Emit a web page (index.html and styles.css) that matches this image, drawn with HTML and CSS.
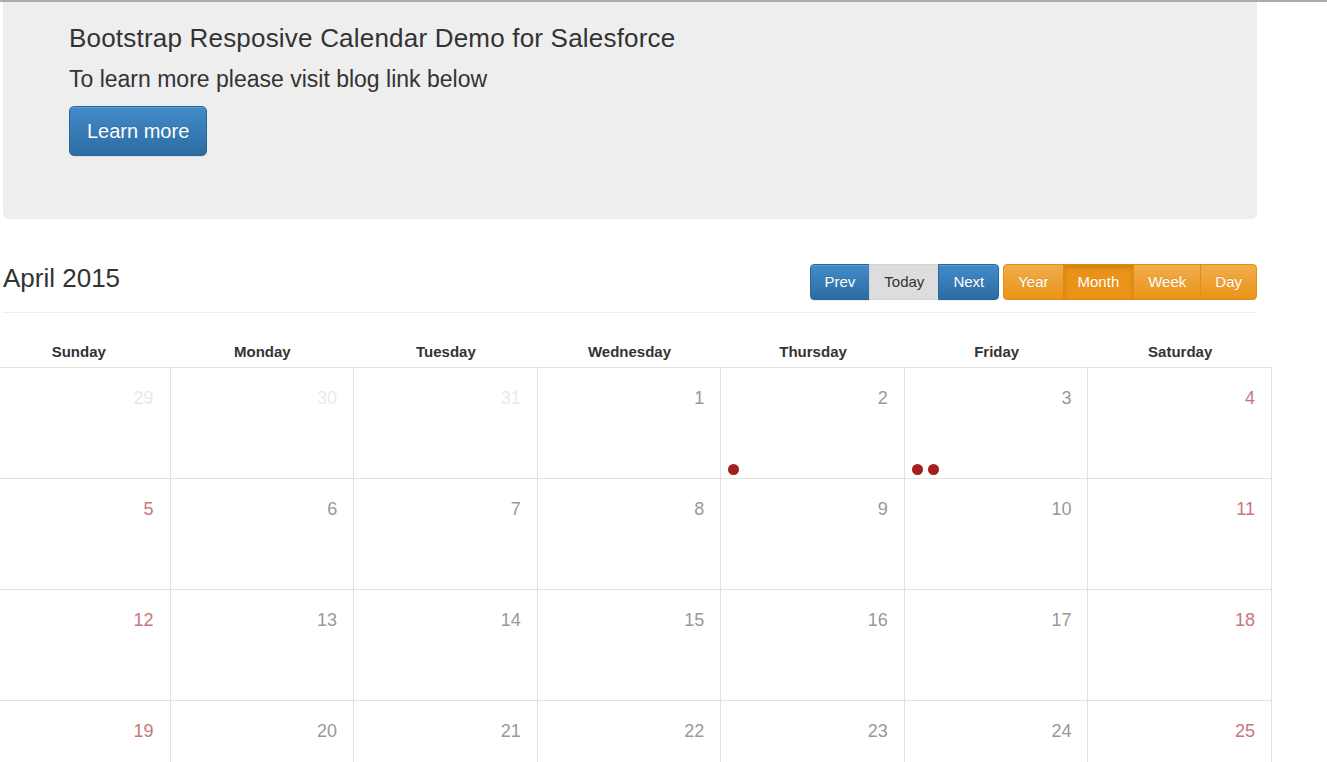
FILE: index.html
```html
<!DOCTYPE html>
<html lang="en">
<head>
  <meta charset="UTF-8">
  <title>Bootstrap Calendar Demo</title>
  <link rel="stylesheet" href="styles.css">
</head>
<body>
  <div class="container">

    <!-- Banner -->
    <div class="jumbotron">
      <h1 class="jumbo-title">Bootstrap Resposive Calendar Demo for Salesforce</h1>
      <p class="lead">To learn more please visit blog link below</p>
      <a class="btn btn-primary btn-lg" href="#">Learn more</a>
    </div>

    <!-- Calendar toolbar -->
    <div class="cal-header">
      <h3 class="cal-title">April 2015</h3>
      <div class="toolbar">
        <div class="btn-group">
          <button class="btn btn-primary">Prev</button>
          <button class="btn btn-default active">Today</button>
          <button class="btn btn-primary">Next</button>
        </div>
        <div class="btn-group">
          <button class="btn btn-warning">Year</button>
          <button class="btn btn-warning active">Month</button>
          <button class="btn btn-warning">Week</button>
          <button class="btn btn-warning">Day</button>
        </div>
      </div>
    </div>

    <!-- Month view -->
    <div class="calendar">
      <div class="cal-head">
        <div>Sunday</div>
        <div>Monday</div>
        <div>Tuesday</div>
        <div>Wednesday</div>
        <div>Thursday</div>
        <div>Friday</div>
        <div>Saturday</div>
      </div>

      <div class="cal-row">
        <div class="cal-day weekend outmonth"><span class="date">29</span></div>
        <div class="cal-day outmonth"><span class="date">30</span></div>
        <div class="cal-day outmonth"><span class="date">31</span></div>
        <div class="cal-day"><span class="date">1</span></div>
        <div class="cal-day"><span class="date">2</span>
          <div class="events"><span class="event"></span></div>
        </div>
        <div class="cal-day"><span class="date">3</span>
          <div class="events"><span class="event"></span><span class="event"></span></div>
        </div>
        <div class="cal-day weekend"><span class="date">4</span></div>
      </div>

      <div class="cal-row">
        <div class="cal-day weekend"><span class="date">5</span></div>
        <div class="cal-day"><span class="date">6</span></div>
        <div class="cal-day"><span class="date">7</span></div>
        <div class="cal-day"><span class="date">8</span></div>
        <div class="cal-day"><span class="date">9</span></div>
        <div class="cal-day"><span class="date">10</span></div>
        <div class="cal-day weekend"><span class="date">11</span></div>
      </div>

      <div class="cal-row">
        <div class="cal-day weekend"><span class="date">12</span></div>
        <div class="cal-day"><span class="date">13</span></div>
        <div class="cal-day"><span class="date">14</span></div>
        <div class="cal-day"><span class="date">15</span></div>
        <div class="cal-day"><span class="date">16</span></div>
        <div class="cal-day"><span class="date">17</span></div>
        <div class="cal-day weekend"><span class="date">18</span></div>
      </div>

      <div class="cal-row">
        <div class="cal-day weekend"><span class="date">19</span></div>
        <div class="cal-day"><span class="date">20</span></div>
        <div class="cal-day"><span class="date">21</span></div>
        <div class="cal-day"><span class="date">22</span></div>
        <div class="cal-day"><span class="date">23</span></div>
        <div class="cal-day"><span class="date">24</span></div>
        <div class="cal-day weekend"><span class="date">25</span></div>
      </div>
    </div>

  </div>
</body>
</html>
```

FILE: styles.css
```css
body {
  margin: 0;
  border-top: 2px solid #ababab;
  font-family: "Liberation Sans", Arial, sans-serif;
  font-size: 14px;
  color: #333;
  background: #fff;
}
.container {
  width: 1254px;
  margin-left: 3px;
}

/* Banner */
.jumbotron {
  background-color: #eee;
  border-radius: 0 0 6px 6px;
  padding: 22px 66px 63px;
}
.jumbo-title {
  margin: 0 0 11px;
  font-size: 26px;
  line-height: 29px;
  font-weight: normal;
  letter-spacing: 0.2px;
}
.lead {
  margin: 0 0 12px;
  font-size: 23px;
  line-height: 30px;
}

/* Buttons */
.btn {
  display: inline-block;
  box-sizing: border-box;
  border: 1px solid transparent;
  border-radius: 4px;
  font-family: inherit;
  text-decoration: none;
  cursor: pointer;
  text-shadow: 0 -1px 0 rgba(0, 0, 0, .1);
}
.btn-lg {
  padding: 10px 17px;
  font-size: 20px;
  line-height: 28px;
  border-radius: 5px;
}
.btn-primary {
  color: #fff;
  background-image: linear-gradient(#428bca, #2d6ca2);
  border-color: #2b669a;
  box-shadow: inset 0 1px 0 rgba(255, 255, 255, .15), 0 1px 1px rgba(0, 0, 0, .075);
}
.btn-warning {
  color: #fff;
  background-image: linear-gradient(#f0ad4e, #eb9316);
  border-color: #e38d13;
}
.btn-warning.active {
  background: #eb9316;
  border-color: #dc8a14;
  box-shadow: inset 0 3px 5px rgba(0, 0, 0, .125);
}
.btn-default.active {
  color: #333;
  background: #dddddd;
  border-color: #d5d5d5;
  text-shadow: none;
}

/* Calendar toolbar */
.cal-header {
  display: flex;
  justify-content: space-between;
  align-items: flex-start;
  margin-top: 45px;
  padding-bottom: 12px;
  border-bottom: 1px solid #eee;
}
.cal-title {
  margin: 0;
  font-size: 26px;
  line-height: 29px;
  font-weight: normal;
}
.toolbar {
  display: flex;
  gap: 4px;
}
.btn-group {
  display: flex;
}
.btn-group .btn {
  height: 36px;
  padding: 0 14px;
  font-size: 15px;
  line-height: 34px;
  border-radius: 0;
}
.btn-group .btn + .btn {
  margin-left: -1px;
}
.btn-group .btn:first-child {
  border-radius: 4px 0 0 4px;
}
.btn-group .btn:last-child {
  border-radius: 0 4px 4px 0;
}

/* Month grid */
.calendar {
  margin: 21px -15px 0 -16px;
}
.cal-head,
.cal-row {
  display: grid;
  grid-template-columns: repeat(7, 1fr);
  border-bottom: 1px solid #e1e1e1;
}
.cal-head div {
  padding: 8px 0 5px;
  text-align: center;
  font-size: 15px;
  font-weight: bold;
  line-height: 20px;
}
.cal-day {
  display: flex;
  flex-direction: column;
  height: 110px;
  box-sizing: border-box;
  padding: 20px 16px 3px 7px;
  border-right: 1px solid #e1e1e1;
}
.date {
  align-self: flex-end;
  font-size: 18px;
  line-height: 20px;
  color: #999;
}
.weekend .date {
  color: #c57878;
}
.outmonth .date {
  color: #ebebeb;
}
.weekend.outmonth .date {
  color: #f3e4e4;
}
.events {
  display: flex;
  gap: 5px;
  margin-top: auto;
}
.event {
  width: 11px;
  height: 11px;
  border-radius: 50%;
  background-color: #a41f1f;
}
```
